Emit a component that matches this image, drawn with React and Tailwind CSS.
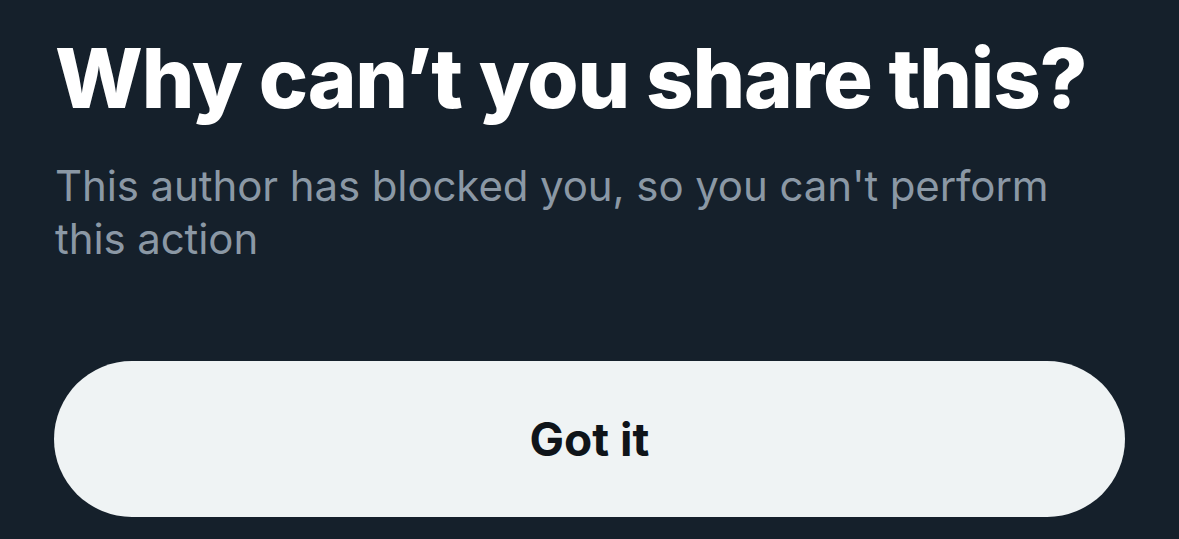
export default function App() {
  return (
    <div className="w-[1179px] h-[539px] overflow-hidden bg-[#15202b] font-['Inter',sans-serif]">
      <div className="px-[55px] pt-[28px]">
        <h1 className="text-[83px] leading-[100px] font-extrabold text-white tracking-[-1.2px]">
          Why can’t you share this?
        </h1>
        <p className="mt-[31px] text-[42px] leading-[53px] tracking-[-0.1px] text-[#8b98a5]">
          This author has blocked you, so you can't perform this action
        </p>
      </div>
      <div className="px-[54px] mt-[96px]">
        <button className="w-full h-[156px] rounded-full bg-[#eff3f4] text-[#0f1419] text-[46px] font-bold">
          Got it
        </button>
      </div>
    </div>
  );
}
